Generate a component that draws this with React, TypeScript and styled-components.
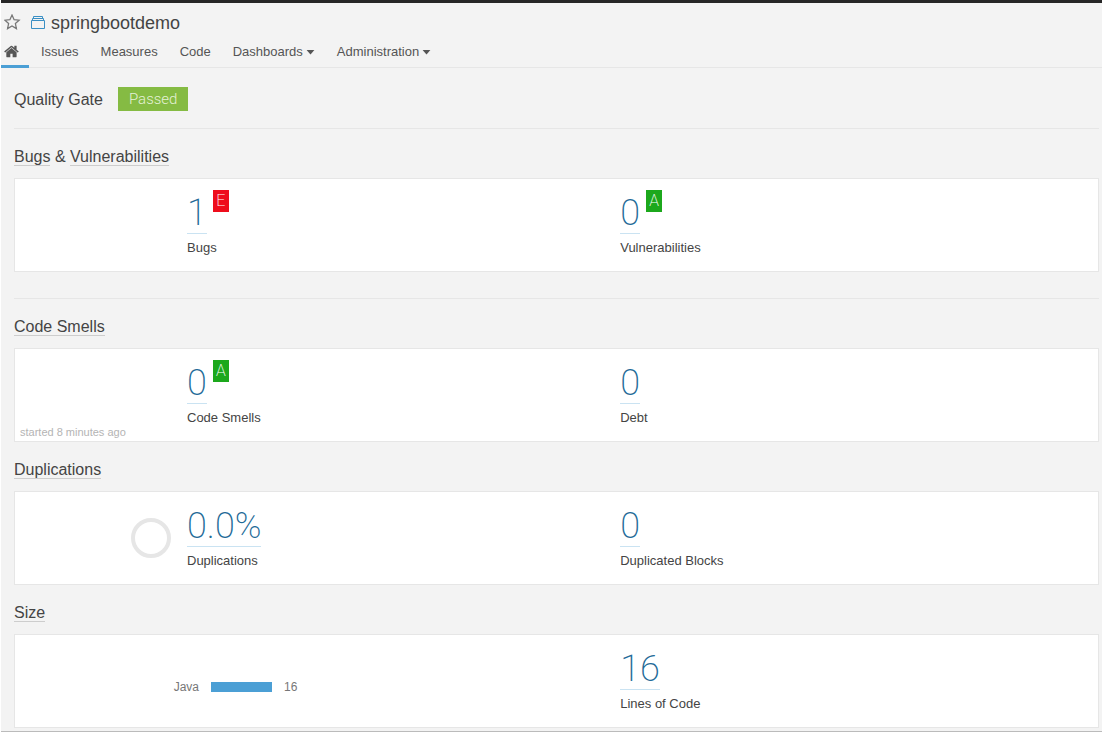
import React from 'react';
import styled, { createGlobalStyle } from 'styled-components';

const GlobalStyle = createGlobalStyle`
  *, *::before, *::after { box-sizing: border-box; }
  body {
    margin: 0;
    background: #fff;
    color: #444;
    font-family: 'Liberation Sans', Arial, Helvetica, sans-serif;
    font-size: 13px;
    line-height: 16px;
  }
`;

const Page = styled.div`
  margin-left: 1px;
  background: #f3f3f3;
  border-top: 3px solid #262626;
`;

const Header = styled.header`
  border-bottom: 1px solid #e6e6e6;
`;

const TitleRow = styled.div`
  display: flex;
  align-items: center;
  height: 36px;
  padding: 4px 3px 0;
`;

const IconButton = styled.button`
  display: flex;
  padding: 0;
  border: 0;
  background: none;
  cursor: pointer;
`;

const ProjectLink = styled.a`
  display: flex;
  align-items: center;
  gap: 5px;
  margin-left: 10px;
  color: #444;
  font-size: 18px;
  line-height: 24px;
  text-decoration: none;
`;

const Nav = styled.nav`
  display: flex;
  gap: 22px;
  margin-bottom: -1px;
`;

const NavLink = styled.a<{ $active?: boolean }>`
  display: flex;
  align-items: center;
  gap: 4px;
  height: 29px;
  padding: ${(p) => (p.$active ? '0 9px 0 3px' : '0')};
  margin-right: ${(p) => (p.$active ? '-10px' : '0')};
  border-bottom: 3px solid ${(p) => (p.$active ? '#4b9fd5' : 'transparent')};
  color: #555;
  text-decoration: none;
`;

const NavButton = styled.button`
  display: flex;
  align-items: center;
  gap: 3px;
  height: 29px;
  padding: 0;
  border: 0;
  border-bottom: 3px solid transparent;
  background: none;
  color: #555;
  font: inherit;
  cursor: pointer;
`;

const Main = styled.main`
  padding: 0 3px 3px 13px;
  border-bottom: 1px solid #bbb;
`;

const Gate = styled.section`
  display: flex;
  align-items: center;
  gap: 15px;
  height: 61px;
  padding-top: 4px;
  border-bottom: 1px solid #e6e6e6;
`;

const Heading = styled.h2`
  margin: 0;
  font-size: 16px;
  font-weight: 400;
  line-height: 18px;
`;

const HeadingLink = styled.a`
  display: inline-block;
  height: 18px;
  border-bottom: 1px solid #cdcdcd;
  color: inherit;
  text-decoration: none;
`;

const GateStatus = styled.span`
  margin-bottom: 2px;
  padding: 0 11px;
  background: #85bb43;
  color: #e4f1d6;
  font-family: Roboto, sans-serif;
  font-size: 15px;
  font-weight: 300;
  line-height: 24px;
`;

const Domain = styled.section<{ $divided?: boolean }>`
  padding: ${(p) => (p.$divided ? '19px 0 26px' : '19px 0 0')};
  border-bottom: ${(p) => (p.$divided ? '1px solid #e6e6e6' : '0')};
`;

const Card = styled.div`
  position: relative;
  display: grid;
  grid-template-columns: 172px 40% 1fr;
  margin-top: 12px;
  padding: 11px 0 15px;
  border: 1px solid #e6e6e6;
  background: #fff;
`;

const ChartCell = styled.div`
  display: flex;
  align-items: center;
  justify-content: flex-end;
  padding: 4px 16px 0 0;
`;

const Measure = styled.div``;

const ValueRow = styled.div`
  display: flex;
  align-items: flex-start;
  gap: 6px;
  margin-bottom: 6px;
`;

const Value = styled.a`
  padding-top: 4px;
  border-bottom: 1px solid #cae3f2;
  color: #236a97;
  font-family: Roboto, sans-serif;
  font-size: 36px;
  font-weight: 200;
  line-height: 39px;
  text-decoration: none;
`;

const Rating = styled.a<{ $level: 'A' | 'E' }>`
  width: 16px;
  background: ${(p) => (p.$level === 'A' ? '#1ca81c' : '#ee0d1c')};
  color: #fff;
  font-family: Roboto, sans-serif;
  font-size: 16px;
  font-weight: 200;
  line-height: 22px;
  text-align: center;
  text-decoration: none;
`;

const Started = styled.span`
  position: absolute;
  left: 5px;
  bottom: 0;
  color: #b4b4b4;
  font-size: 11px;
  line-height: 17px;
`;

const Languages = styled.div`
  display: flex;
  grid-column: span 2;
  align-items: center;
  gap: 12px;
  padding-top: 16px;
  color: #777;
  font-size: 12px;
`;

const LanguageName = styled.span`
  width: 184px;
  text-align: right;
`;

const LanguageBar = styled.span`
  width: 61px;
  height: 10px;
  background: #4b9fd5;
`;

const Caret = () => (
  <svg width="9" height="7" viewBox="0 0 9 7" aria-hidden="true">
    <path d="M.6 1h7.8L4.5 5.5z" fill="#555" />
  </svg>
);

const StarIcon = () => (
  <svg width="17" height="18" viewBox="0 0 17 18" aria-hidden="true">
    <path
      d="M8 1.1l2.1 4.6 5 .5-3.7 3.4 1 5-4.4-2.6-4.4 2.6 1-5L.9 6.2l5-.5z"
      fill="none"
      stroke="#777"
      strokeWidth="1.3"
    />
  </svg>
);

const ProjectIcon = () => (
  <svg width="15" height="14" viewBox="0 0 15 14" aria-hidden="true">
    <g fill="none" stroke="#3a8fc4">
      <path d="M.5 4.5h13v8H.5z" />
      <path d="M1.5 4V2.5h11V4M2.5 2V.5h9V2" />
    </g>
  </svg>
);

const HomeIcon = () => (
  <svg width="16" height="16" viewBox="60 60 1792 1792" aria-hidden="true">
    <path
      fill="#555"
      d="M1472 992v480q0 26-19 45t-45 19h-384v-384h-256v384h-384q-26 0-45-19t-19-45v-480q0-1 .5-3t.5-3l575-474 575 474q1 2 1 6zm223-69l-62 74q-8 9-21 11h-3q-13 0-21-7l-692-577-692 577q-12 8-24 7-13-2-21-11l-62-74q-8-10-7-23.5t11-21.5l719-599q32-26 76-26t76 26l244 204v-195q0-14 9-23t23-9h192q14 0 23 9t9 23v408l219 182q10 8 11 21.5t-7 23.5z"
    />
  </svg>
);

const Donut = () => (
  <svg width="40" height="40" viewBox="0 0 40 40" aria-hidden="true">
    <circle cx="20" cy="20" r="18" fill="none" stroke="#e6e6e6" strokeWidth="4" />
  </svg>
);

type MetricProps = { value: string; label: string; rating?: 'A' | 'E' };

const Metric = ({ value, label, rating }: MetricProps) => (
  <Measure>
    <ValueRow>
      <Value href="#">{value}</Value>
      {rating && (
        <Rating href="#" $level={rating}>
          {rating}
        </Rating>
      )}
    </ValueRow>
    <div>{label}</div>
  </Measure>
);

export default function App() {
  return (
    <>
      <GlobalStyle />
      <Page>
        <Header>
          <TitleRow>
            <IconButton type="button" aria-label="Add to favorites">
              <StarIcon />
            </IconButton>
            <ProjectLink href="#">
              <ProjectIcon />
              springbootdemo
            </ProjectLink>
          </TitleRow>
          <Nav>
            <NavLink href="#" $active aria-label="Home">
              <HomeIcon />
            </NavLink>
            <NavLink href="#">Issues</NavLink>
            <NavLink href="#">Measures</NavLink>
            <NavLink href="#">Code</NavLink>
            <NavButton type="button">
              Dashboards
              <Caret />
            </NavButton>
            <NavButton type="button">
              Administration
              <Caret />
            </NavButton>
          </Nav>
        </Header>
        <Main>
          <Gate>
            <Heading>Quality Gate</Heading>
            <GateStatus>Passed</GateStatus>
          </Gate>
          <Domain $divided>
            <Heading>
              <HeadingLink href="#">Bugs</HeadingLink> &amp; <HeadingLink href="#">Vulnerabilities</HeadingLink>
            </Heading>
            <Card>
              <ChartCell />
              <Metric value="1" label="Bugs" rating="E" />
              <Metric value="0" label="Vulnerabilities" rating="A" />
            </Card>
          </Domain>
          <Domain>
            <Heading>
              <HeadingLink href="#">Code Smells</HeadingLink>
            </Heading>
            <Card>
              <ChartCell />
              <Metric value="0" label="Code Smells" rating="A" />
              <Metric value="0" label="Debt" />
              <Started>started 8 minutes ago</Started>
            </Card>
          </Domain>
          <Domain>
            <Heading>
              <HeadingLink href="#">Duplications</HeadingLink>
            </Heading>
            <Card>
              <ChartCell>
                <Donut />
              </ChartCell>
              <Metric value="0.0%" label="Duplications" />
              <Metric value="0" label="Duplicated Blocks" />
            </Card>
          </Domain>
          <Domain>
            <Heading>
              <HeadingLink href="#">Size</HeadingLink>
            </Heading>
            <Card>
              <Languages>
                <LanguageName>Java</LanguageName>
                <LanguageBar />
                <span>16</span>
              </Languages>
              <Metric value="16" label="Lines of Code" />
            </Card>
          </Domain>
        </Main>
      </Page>
    </>
  );
}
